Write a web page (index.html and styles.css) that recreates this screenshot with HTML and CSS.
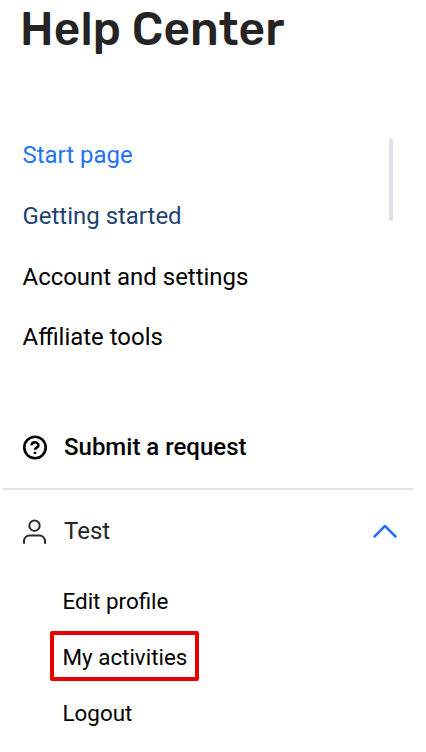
FILE: index.html
```html
<!DOCTYPE html>
<html lang="en">
<head>
<meta charset="utf-8">
<title>Help Center</title>
<link rel="stylesheet" href="styles.css">
</head>
<body>
<h1 class="title">Help Center</h1>
<div class="menu">
  <nav class="topics">
    <a class="topic active">Start page</a>
    <a class="topic visited">Getting started</a>
    <a class="topic">Account and settings</a>
    <a class="topic">Affiliate tools</a>
  </nav>
  <div class="scrollbar"></div>
</div>
<a class="request">
  <svg class="icon help" viewBox="0 0 26 26"><circle cx="13" cy="12.500" r="10.700"/><path d="M9.700 10.400a3.300 2.900 0 1 1 5 2.300c-1 .6-1.700.9-1.700 2M13 16.700v2.400"/></svg>
  <span>Submit a request</span>
</a>
<section class="account">
  <div class="user">
    <svg class="icon person" viewBox="0 0 26 26"><circle cx="12.500" cy="6.700" r="5.200"/><path d="M2 24.700v-2.700a5.500 5.500 0 0 1 5.500-5.500h10a5.500 5.500 0 0 1 5.500 5.500v2.700"/></svg>
    <span>Test</span>
    <svg class="chevron" viewBox="0 0 26 16"><path d="M2.500 13.500 13 3l10.500 10.500"/></svg>
  </div>
  <div class="links">
    <a class="link">Edit profile</a>
    <a class="link marked">My activities</a>
    <a class="link">Logout</a>
  </div>
</section>
</body>
</html>
```
FILE: styles.css
```css
* { box-sizing: border-box; }
body { margin: 0; height: 752px; overflow: hidden; background: #fff; color: #000; font-family: Roboto, sans-serif; }
.title { margin: 0; padding: 1px 0 0 20px; height: 138px; font: 500 46px/58px Rubik, Roboto, sans-serif; letter-spacing: 0.150px; color: #242424; white-space: nowrap; }
.menu { display: flex; justify-content: space-between; height: 285px; padding: 0 33px 0 22.500px; }
.topics { display: flex; flex-direction: column; padding-top: 2px; }
.topic { height: 60.800px; font-size: 23.960px; line-height: 30px; white-space: nowrap; }
.active { color: #2172f8; }
.visited { color: #1f426f; }
.scrollbar { width: 4px; height: 83px; border-radius: 2px; background: #e2e1e8; }
.request { display: flex; align-items: center; height: 48px; padding-left: 22px; font-size: 24px; font-weight: 500; gap: 16px; }
.icon { width: 26px; height: 26px; flex: none; fill: none; stroke: #000; stroke-width: 2.600; }
.help { margin-top: 1px; }
.account { margin: 17px 13px 0 3px; border-top: 2px solid #e2e1e6; }
.user { display: flex; align-items: center; height: 81px; padding: 0 15px 0 19px; gap: 16px; font-size: 24px; color: #242424; }
.person { stroke: #2c2c2c; stroke-width: 2; margin-top: 2px; }
.chevron { width: 26px; height: 16px; margin-left: auto; fill: none; stroke: #2172f8; stroke-width: 2.500; stroke-linecap: round; stroke-linejoin: round; }
.links { display: flex; flex-direction: column; align-items: flex-start; padding: 4px 0 0 47px; }
.link { height: 50px; margin-bottom: 6px; padding: 0 8px 0 8.500px; border: 4px solid transparent; font-size: 22.400px; line-height: 45px; white-space: nowrap; }
.marked { border-color: #e60000; border-radius: 2px; }
```
